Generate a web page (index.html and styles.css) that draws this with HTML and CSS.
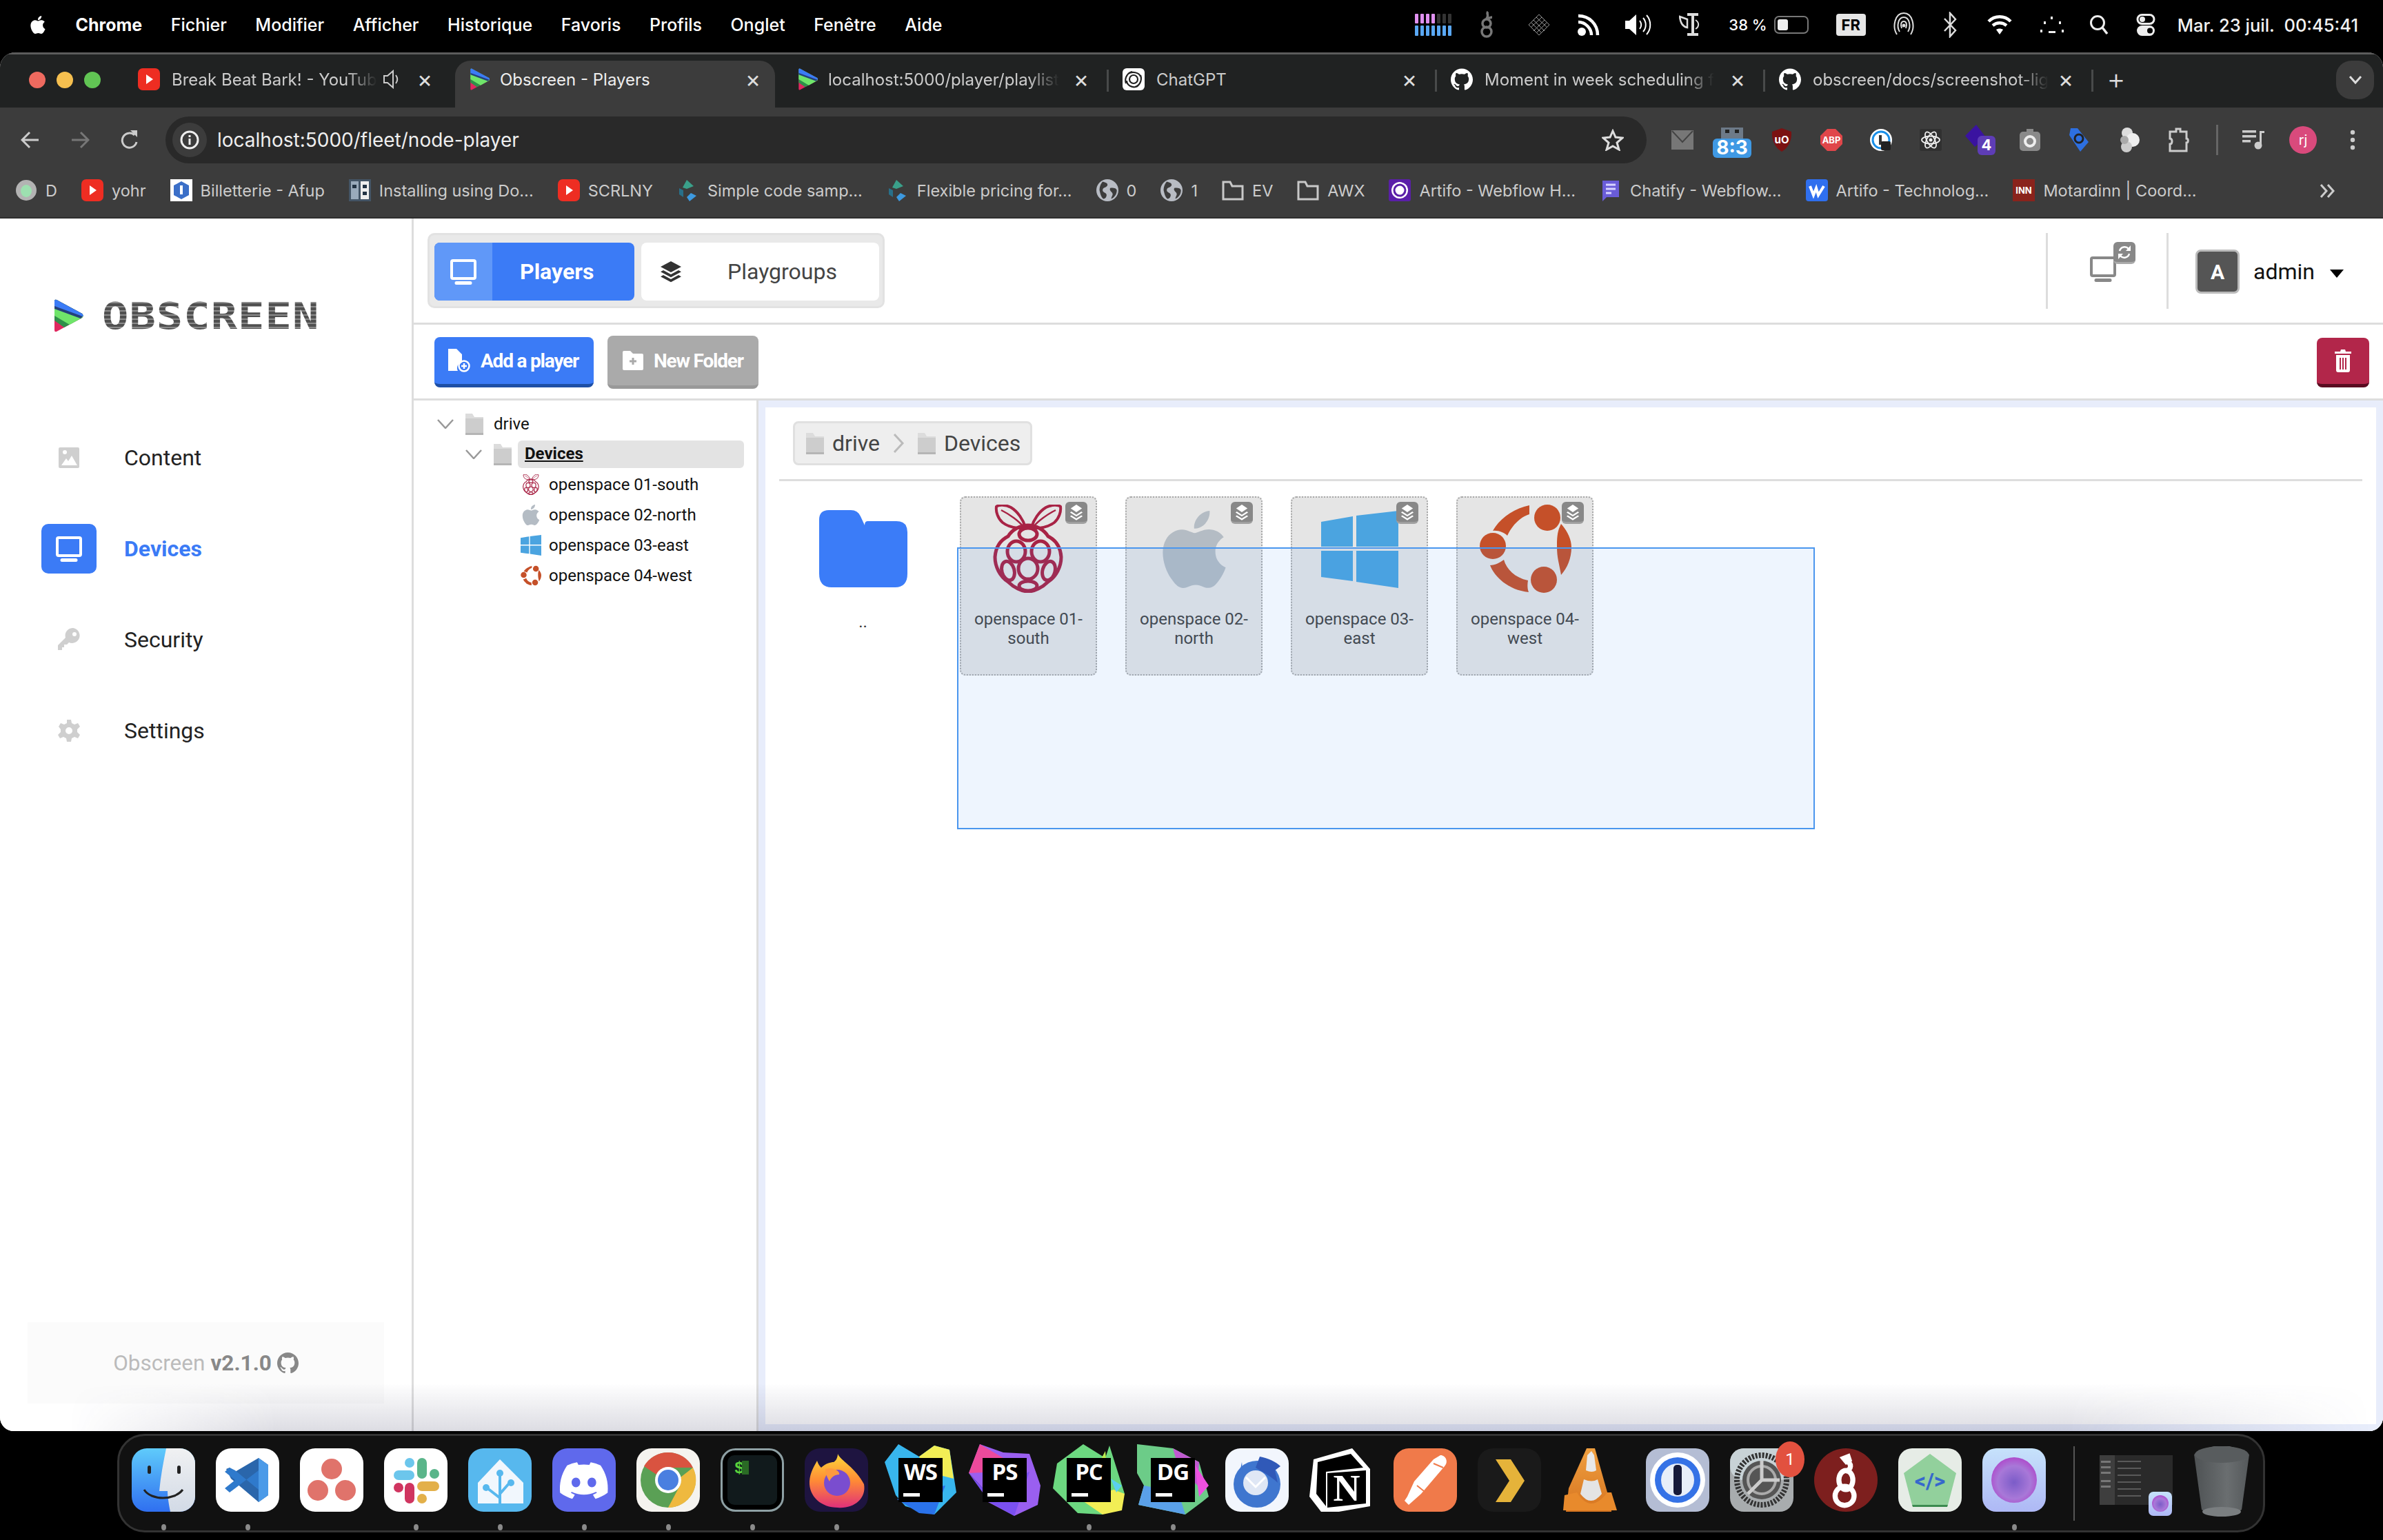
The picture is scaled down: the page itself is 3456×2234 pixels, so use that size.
FILE: index.html
```html
<!DOCTYPE html>
<html lang="fr">
<head>
<meta charset="utf-8">
<title>Obscreen - Players</title>
<link rel="stylesheet" href="styles.css">
</head>
<body>
<svg class="defs" width="0" height="0" aria-hidden="true">
<defs>
<linearGradient id="g-finder" x1="0" y1="0" x2="0" y2="1"><stop offset="0" stop-color="#5fcbfb"/><stop offset="1" stop-color="#2f6ff0"/></linearGradient>
<linearGradient id="g-finder2" x1="0" y1="0" x2="0" y2="1"><stop offset="0" stop-color="#f0f1f2"/><stop offset="1" stop-color="#d2dae6"/></linearGradient>
<linearGradient id="g-fox" x1="0" y1="0" x2="0" y2="1"><stop offset="0" stop-color="#ffd83a"/><stop offset=".5" stop-color="#ff8a35"/><stop offset="1" stop-color="#e0307a"/></linearGradient>
<linearGradient id="g-marble" x1="0" y1="0" x2="0" y2="1"><stop offset="0" stop-color="#c6e2fb"/><stop offset="1" stop-color="#aeb8f5"/></linearGradient>
<radialGradient id="g-orb" cx=".5" cy=".55" r=".6"><stop offset="0" stop-color="#7b5cc8"/><stop offset=".6" stop-color="#a878d8"/><stop offset="1" stop-color="#b040c8"/></radialGradient>
<linearGradient id="g-trash" x1="0" y1="0" x2="1" y2="0"><stop offset="0" stop-color="#4e5254"/><stop offset=".6" stop-color="#6a6e70"/><stop offset="1" stop-color="#55595b"/></linearGradient>
<linearGradient id="g-cone" x1="0" y1="0" x2="0" y2="1"><stop offset="0" stop-color="#f0a040"/><stop offset="1" stop-color="#d67420"/></linearGradient>

<symbol id="i-logo" viewBox="0 0 45 48">
<path d="M2 3 Q2 0 5 1 L42 21 Q45 24 42 27 L5 47 Q2 48 2 45Z" fill="#e0285f"/>
<path d="M2 3 Q2 0 5 1 L42 21 Q45 24 42 27 L16 41 L2 31Z" fill="#2f8f4a"/>
<path d="M2 3 Q2 0 5 1 L42 21 Q45 24 42 27 L24 37 L2 24Z" fill="#6fe56a"/>
<path d="M2 3 Q2 0 5 1 L42 21 Q45 24 40 28 L2 14Z" fill="#24407a"/>
<path d="M2 3 Q2 0 5 1 L42 21 Q45 24 43 25 L2 10Z" fill="#3b7bf6"/>
</symbol>
<symbol id="i-yt" viewBox="0 0 32 32"><rect y="0" width="32" height="32" rx="7" fill="#ee2d22"/><path d="M12 9l10 7-10 7z" fill="#fff"/></symbol>
<symbol id="i-gh" viewBox="0 0 24 24"><path fill="currentColor" d="M12 .297c-6.63 0-12 5.373-12 12 0 5.303 3.438 9.8 8.205 11.385.6.113.82-.258.82-.577 0-.285-.01-1.04-.015-2.04-3.338.724-4.042-1.61-4.042-1.61C4.422 18.07 3.633 17.7 3.633 17.7c-1.087-.744.084-.729.084-.729 1.205.084 1.838 1.236 1.838 1.236 1.07 1.835 2.809 1.305 3.495.998.108-.776.417-1.305.76-1.605-2.665-.3-5.466-1.332-5.466-5.93 0-1.31.465-2.38 1.235-3.22-.135-.303-.54-1.523.105-3.176 0 0 1.005-.322 3.3 1.23.96-.267 1.98-.399 3-.405 1.02.006 2.04.138 3 .405 2.28-1.552 3.285-1.23 3.285-1.23.645 1.653.24 2.873.12 3.176.765.84 1.23 1.91 1.23 3.22 0 4.61-2.805 5.625-5.475 5.92.42.36.81 1.096.81 2.22 0 1.606-.015 2.896-.015 3.286 0 .315.21.69.825.57C20.565 22.092 24 17.592 24 12.297c0-6.627-5.373-12-12-12"/></symbol>
<symbol id="i-apple" viewBox="0 0 24 24"><path fill="currentColor" d="M12.152 6.896c-.948 0-2.415-1.078-3.96-1.04-2.04.027-3.91 1.183-4.961 3.014-2.117 3.675-.546 9.103 1.519 12.09 1.013 1.454 2.208 3.09 3.792 3.039 1.52-.065 2.09-.987 3.935-.987 1.831 0 2.35.987 3.96.948 1.637-.026 2.676-1.48 3.676-2.948 1.156-1.688 1.636-3.325 1.662-3.415-.039-.013-3.182-1.221-3.22-4.857-.026-3.04 2.48-4.494 2.597-4.559-1.429-2.09-3.623-2.324-4.39-2.376-2-.156-3.675 1.09-4.61 1.09zM15.53 3.83c.843-1.012 1.4-2.427 1.245-3.83-1.207.052-2.662.805-3.532 1.818-.78.896-1.454 2.338-1.273 3.714 1.338.104 2.715-.688 3.559-1.701"/></symbol>
<symbol id="i-rpi" viewBox="0 0 103 128">
<g fill="none" stroke="#a82345" stroke-width="5">
<path stroke-width="4" d="M47 33C44 22 36 10 26 4 18 0 8 0 5 3 4 10 7 20 14 26 22 32 36 36 47 33ZM56 33C59 22 67 10 77 4 85 0 95 0 98 3 99 10 96 20 89 26 81 32 67 36 56 33Z"/>
<path stroke-width="2.500" d="M12 8C24 14 38 24 44 32M91 8C79 14 65 24 59 32"/>
<path d="M51 30C40 30 28 36 22 46 10 52 4 62 3 76 3 90 10 104 22 112 30 120 42 126 51 126 60 126 72 120 80 112 92 104 99 90 99 76 98 62 92 52 80 46 74 36 62 30 51 30Z"/>
<ellipse cx="51" cy="43" rx="13" ry="9"/>
<ellipse cx="34" cy="68" rx="13" ry="15"/><ellipse cx="69" cy="68" rx="13" ry="15"/>
<ellipse cx="51" cy="93" rx="14" ry="15"/>
<ellipse cx="22" cy="96" rx="9" ry="14" transform="rotate(-15 22 96)"/><ellipse cx="81" cy="96" rx="9" ry="14" transform="rotate(15 81 96)"/>
<ellipse cx="51" cy="118" rx="13" ry="7"/>
</g></symbol>
<symbol id="i-win" viewBox="0 0 112 112"><path fill="#4ba4e0" d="M0 16 46 8V52H0ZM51 7 112 0V52H51ZM0 58H46V102L0 96ZM51 58H112V112L51 103Z"/></symbol>
<symbol id="i-ubuntu" viewBox="0 0 134 128">
<g fill="#c55029"><ellipse cx="99" cy="19" rx="19" ry="19"/><ellipse cx="20" cy="60" rx="19" ry="19"/><ellipse cx="94" cy="109" rx="19" ry="19"/></g>
<path d="M73 1C50 6 30 20 20 38 28 37 37 41 41 45 48 30 60 18 73 14ZM119 28C115 36 113 42 113 60 113 78 116 84 119 102 128 92 134 78 134 62 134 50 128 38 119 28ZM16 88C22 104 42 124 72 127 70 122 70 116 71 110 52 106 40 94 36 80 30 84 24 88 16 88Z" fill="#c55029"/>
</symbol>
<symbol id="i-monitor" viewBox="0 0 40 40"><path fill="currentColor" d="M5 2h30a4 4 0 0 1 4 4v22a4 4 0 0 1-4 4H5a4 4 0 0 1-4-4V6a4 4 0 0 1 4-4zm0 4v22h30V6zM10 34h20a2 2 0 0 1 0 5H10a2 2 0 0 1 0-5z"/></symbol>
<symbol id="i-layers" viewBox="0 0 32 32"><path fill="currentColor" d="M16 1 31 9 16 17 1 9ZM5 14l11 6 11-6 4 2.300-15 8-15-8ZM5 21l11 6 11-6 4 2.300-15 8-15-8Z"/></symbol>
<symbol id="i-folder" viewBox="0 0 128 112"><path fill="currentColor" d="M0 14Q0 0 14 0H46Q56 0 60 9L66 22Q66 16 70 16H112Q128 16 128 32V92Q128 112 110 112H18Q0 112 0 92Z"/></symbol>
<symbol id="i-oldfolder" viewBox="0 0 28 32"><path fill="#dcdcdc" d="M1 1h10l3 5h13v26H1z"/><path fill="#cdcdcd" d="M1 8h26v24H1z"/><path fill="#b5b5b5" d="M1 29h26v3H1z"/></symbol>
<symbol id="i-globe" viewBox="0 0 28 28"><circle cx="14" cy="14" r="14" fill="#b8bcc4"/><path fill="#3c3c3c" d="M8 3c4 1 7 2 6 5-2 3-6 2-6 6 0 3 5 3 5 6 0 3-2 5-4 5-3-2-4-7-5-11C4 9 6 5 8 3zM18 11c4 0 7 0 8 3 0 5-3 9-7 11 0-4 3-5 1-8-2-2-4-4-2-6z"/></symbol>
<symbol id="i-bfolder" viewBox="0 0 32 32"><path fill="none" stroke="#c8c8c8" stroke-width="3" d="M2 4h10l3 6h15v19H2z"/></symbol>
<symbol id="i-chat" viewBox="0 0 32 32"><rect width="32" height="32" rx="6" fill="#fff"/><g fill="none" stroke="#222" stroke-width="2.200"><circle cx="16" cy="16" r="6"/><path d="M8 8C14 4 24 6 26 12M26 10C29 18 24 26 18 27M22 26C14 30 6 24 6 18M5 22C2 14 8 6 14 5"/></g></symbol>
<symbol id="i-stack" viewBox="0 0 22 26"><path fill="#fff" d="M11 1 20 7 11 13 2 7ZM3 12l8 5 8-5 2 1.500-10 6.500-10-6.500ZM3 18l8 5 8-5 2 1.500-10 6.500-10-6.500Z"/></symbol>
</defs>
</svg>

<div class="screen">
  <header class="menubar">
    <nav class="menu-left">
      <svg class="apple"><use href="#i-apple"/></svg>
      <span class="menu-app">Chrome</span><span>Fichier</span><span>Modifier</span><span>Afficher</span><span>Historique</span><span>Favoris</span><span>Profils</span><span>Onglet</span><span>Fenêtre</span><span>Aide</span>
    </nav>
    <div class="menu-right">
      <svg class="mi-meter" width="54" height="32" viewBox="0 0 54 32"><g fill="#e090f0"><rect x="0" width="5" height="14" rx="1"/><rect x="8" width="5" height="14" rx="1"/><rect x="16" width="5" height="14" rx="1"/><rect x="24" width="5" height="14" rx="1"/></g><g fill="#333"><rect x="32" width="5" height="14" rx="1"/><rect x="40" width="5" height="14" rx="1"/><rect x="48" width="5" height="14" rx="1"/></g><g fill="#5aa8f5"><rect x="0" y="17" width="5" height="15" rx="1"/><rect x="8" y="17" width="5" height="15" rx="1"/><rect x="16" y="17" width="5" height="15" rx="1"/><rect x="24" y="17" width="5" height="15" rx="1"/><rect x="32" y="17" width="5" height="15" rx="1"/><rect x="40" y="17" width="5" height="15" rx="1"/><rect x="48" y="17" width="5" height="15" rx="1"/></g></svg>
      <svg class="mi-snake" width="24" height="40" viewBox="0 0 24 40"><g fill="none" stroke="#777" stroke-width="3.500"><circle cx="12" cy="18" r="6"/><circle cx="12" cy="30" r="7"/><path d="M14 1c-3 3 2 4-2 10 2 0 6-2 8-2"/></g></svg>
      <svg class="mi-net" width="32" height="32" viewBox="0 0 32 32"><g fill="none" stroke="#999" stroke-width="1"><path d="M16 1 31 16 16 31 1 16Z"/><path d="M8 9 24 25M12 5 28 20M4 12 20 28M24 9 8 25M20 5 4 20M28 12 12 28"/></g></svg>
      <svg class="mi-rss" width="32" height="32" viewBox="0 0 32 32"><circle cx="6" cy="26" r="6" fill="#fff"/><g fill="none" stroke="#fff" stroke-width="4.500"><path d="M1 12c10 0 19 9 19 19"/><path d="M1 3c16 0 28 12 28 28"/></g></svg>
      <svg class="mi-vol" width="38" height="30" viewBox="0 0 38 30"><path d="M0 9h6l10-9v30L6 21H0z" fill="#fff"/><g fill="none" stroke="#fff" stroke-width="2"><path d="M21 9c3 4 3 8 0 12M26 5c5 6 5 14 0 20M31 1c7 8 7 20 0 28"/></g></svg>
      <svg class="mi-tool" width="32" height="34" viewBox="0 0 32 34"><path d="M1 5 12 9v12C6 20 2 14 1 5z" fill="none" stroke="#ddd" stroke-width="2.500"/><path d="M12 2h16M20 2v28M12 31h16" stroke="#ddd" stroke-width="4" fill="none"/><path d="M24 10c6 4 5 10 0 13" stroke="#ddd" stroke-width="2" fill="none"/></svg>
      <span class="menu-pct">38 %</span>
      <span class="battery"><span class="battery-level"></span></span>
      <span class="fr-box">FR</span>
      <svg class="mi-air" width="30" height="38" viewBox="0 0 30 38"><g fill="none" stroke="#ddd" stroke-width="2"><path d="M5 33C-2 22 2 2 15 2s17 20 10 31"/><path d="M9 29C4 21 7 8 15 8s11 13 6 21"/><path d="M12 24C10 19 11 14 15 14s5 5 3 10"/></g><circle cx="15" cy="20" r="2.500" fill="#ddd"/></svg>
      <svg class="mi-bt" width="20" height="38" viewBox="0 0 20 38"><path d="M2 10 18 27 10 36V2L18 11 2 28" fill="none" stroke="#ddd" stroke-width="2.500"/></svg>
      <svg class="mi-wifi" width="36" height="30" viewBox="0 0 36 30"><g fill="none" stroke="#fff" stroke-width="4.500"><path d="M2 10c9-9 23-9 32 0"/><path d="M8 16c6-5 14-5 20 0"/></g><path d="M13 22c3-2 7-2 10 0l-5 7z" fill="#fff"/></svg>
      <svg class="mi-dots" width="36" height="28" viewBox="0 0 36 28"><g fill="#eee"><rect x="16" y="2" width="3" height="4"/><rect x="6" y="9" width="3" height="4"/><rect x="28" y="9" width="3" height="4"/><rect x="1" y="21" width="3" height="4"/><rect x="13" y="23" width="10" height="3"/><rect x="32" y="21" width="3" height="4"/></g></svg>
      <svg class="mi-search" width="28" height="30" viewBox="0 0 28 30"><circle cx="12" cy="12" r="9.500" fill="none" stroke="#eee" stroke-width="3"/><path d="M19 19l7 9" stroke="#eee" stroke-width="3.500"/></svg>
      <svg class="mi-ctl" width="28" height="32" viewBox="0 0 28 32"><rect x="2" y="1.500" width="24" height="13" rx="6.500" fill="none" stroke="#eee" stroke-width="3"/><circle cx="9" cy="8" r="4" fill="#eee"/><rect x="1" y="17" width="26" height="15" rx="7.500" fill="#eee"/><circle cx="20" cy="24.500" r="4" fill="#000"/></svg>
      <span class="menu-date">Mar. 23 juil.&nbsp; 00:45:41</span>
    </div>
  </header>

  <div class="window">
    <div class="tabstrip">
      <div class="lights"><i class="light light-r"></i><i class="light light-y"></i><i class="light light-g"></i></div>
      <div class="tab"><svg class="fav"><use href="#i-yt"/></svg><span class="tab-title tab-fade">Break Beat Bark! - YouTub</span>
        <svg class="tab-sound" width="24" height="28" viewBox="0 0 24 28"><path d="M1 9h5l8-7v24l-8-7H1z" fill="none" stroke="#ccc" stroke-width="2"/><path d="M18 8c3 4 3 8 0 12" fill="none" stroke="#ccc" stroke-width="2"/></svg>
        <span class="tab-x">×</span></div>
      <div class="tab tab-active"><svg class="fav fav-logo"><use href="#i-logo"/></svg><span class="tab-title">Obscreen - Players</span><span class="tab-x">×</span></div>
      <div class="tab tab-sep tab-third"><svg class="fav fav-logo"><use href="#i-logo"/></svg><span class="tab-title tab-fade">localhost:5000/player/playlist</span><span class="tab-x">×</span></div>
      <div class="tab tab-sep"><svg class="fav"><use href="#i-chat"/></svg><span class="tab-title">ChatGPT</span><span class="tab-x">×</span></div>
      <div class="tab tab-sep"><svg class="fav fav-gh"><use href="#i-gh"/></svg><span class="tab-title tab-fade">Moment in week scheduling f</span><span class="tab-x">×</span></div>
      <div class="tab tab-sep"><svg class="fav fav-gh"><use href="#i-gh"/></svg><span class="tab-title tab-fade">obscreen/docs/screenshot-lig</span><span class="tab-x">×</span></div>
      <span class="tab-plus">+</span>
      <span class="tab-menu"><svg width="20" height="14" viewBox="0 0 20 14"><path d="M2 2l8 9 8-9" fill="none" stroke="#ddd" stroke-width="3"/></svg></span>
    </div>

    <div class="toolbar-chrome">
      <button class="cbtn" type="button"><svg width="28" height="26" viewBox="0 0 28 26"><path d="M26 13H3M13 2 2 13l11 11" fill="none" stroke="#ccc" stroke-width="3"/></svg></button>
      <button class="cbtn" type="button"><svg width="28" height="26" viewBox="0 0 28 26"><path d="M2 13h23M15 2l11 11-11 11" fill="none" stroke="#777" stroke-width="3"/></svg></button>
      <button class="cbtn" type="button"><svg width="26" height="28" viewBox="0 0 26 28"><path d="M23 17A10.500 10.500 0 1 1 20 7" fill="none" stroke="#ccc" stroke-width="3"/><path d="M14 0h10v10z" fill="#ccc"/></svg></button>
      <div class="omnibox">
        <span class="omni-info"><svg width="28" height="28" viewBox="0 0 28 28"><circle cx="14" cy="14" r="12" fill="none" stroke="#eee" stroke-width="3"/><rect x="12.500" y="12" width="3" height="9" fill="#eee"/><rect x="12.500" y="7" width="3" height="3" fill="#eee"/></svg></span>
        <span class="omni-url">localhost:5000/fleet/node-player</span>
        <svg class="omni-star" width="32" height="32" viewBox="0 0 32 32"><path d="M16 3l4 9 10 1-8 7 3 10-9-5-9 5 3-10-8-7 10-1z" fill="none" stroke="#ddd" stroke-width="3"/></svg>
      </div>
      <div class="exts">
        <span class="ext"><svg width="32" height="28" viewBox="0 0 32 28"><rect width="32" height="28" fill="#777"/><path d="M1 1l15 16L31 1" fill="none" stroke="#444" stroke-width="2"/></svg></span>
        <span class="ext"><svg class="ext-clock" width="56" height="44" viewBox="0 0 56 44"><rect x="12" y="0" width="32" height="16" fill="#6d7a88"/><rect x="18" y="3" width="6" height="5" fill="#222"/><rect x="32" y="3" width="6" height="5" fill="#222"/><rect x="0" y="16" width="56" height="28" rx="6" fill="#3f99e4"/><text x="28" y="39" text-anchor="middle" class="ext-clock-text">8:3</text></svg></span>
        <span class="ext"><svg width="30" height="34" viewBox="0 0 30 34"><path d="M15 0 29 5C30 18 24 29 15 34 6 29 0 18 1 5z" fill="#7a1212"/><text x="15" y="22" text-anchor="middle" class="ext-ub">uO</text></svg></span>
        <span class="ext"><svg width="32" height="32" viewBox="0 0 32 32"><path d="M10 0h12l10 10v12L22 32H10L0 22V10z" fill="#e0464a"/><text x="16" y="21" text-anchor="middle" class="ext-abp">ABP</text></svg></span>
        <span class="ext"><svg width="32" height="32" viewBox="0 0 32 32"><circle cx="16" cy="16" r="16" fill="#fff"/><circle cx="16" cy="16" r="12" fill="none" stroke="#1a8fe8" stroke-width="3"/><rect x="13" y="9" width="4" height="14" fill="#333"/><rect x="16" y="18" width="14" height="13" rx="2" fill="#222"/></svg></span>
        <span class="ext"><svg width="32" height="32" viewBox="0 0 32 32"><rect width="32" height="32" rx="3" fill="#303030"/><g fill="none" stroke="#eee" stroke-width="1.800"><ellipse cx="16" cy="16" rx="13" ry="5.500"/><ellipse cx="16" cy="16" rx="13" ry="5.500" transform="rotate(60 16 16)"/><ellipse cx="16" cy="16" rx="13" ry="5.500" transform="rotate(120 16 16)"/></g><circle cx="16" cy="16" r="2.500" fill="#eee"/></svg></span>
        <span class="ext"><svg width="44" height="44" viewBox="0 0 44 44"><path d="M16 0 30 18 14 32 0 16z" fill="#3a13a0"/><rect x="18" y="16" width="26" height="28" rx="6" fill="#5e3db6"/><text x="31" y="37" text-anchor="middle" class="ext-four">4</text></svg></span>
        <span class="ext"><svg width="30" height="32" viewBox="0 0 30 32"><rect y="4" width="30" height="28" rx="5" fill="#8a8a8a"/><rect x="10" y="0" width="10" height="6" fill="#8a8a8a"/><circle cx="15" cy="18" r="7" fill="none" stroke="#eee" stroke-width="4"/></svg></span>
        <span class="ext"><svg width="30" height="34" viewBox="0 0 30 34"><path d="M2 0h10l16 20-12 14L0 10z" fill="#2d6fe0"/><circle cx="14" cy="15" r="6" fill="none" stroke="#222" stroke-width="3"/></svg></span>
        <span class="ext"><svg width="30" height="36" viewBox="0 0 30 36"><circle cx="12" cy="8" r="8" fill="#ddd"/><circle cx="20" cy="18" r="10" fill="#eee"/><circle cx="11" cy="28" r="8" fill="#ccc"/><circle cx="8" cy="18" r="6" fill="#aaa"/></svg></span>
        <span class="ext"><svg width="30" height="36" viewBox="0 0 30 36"><path d="M2 6h9V2h6v4h9v10c3 0 3 6 0 6v12H2V24c4 0 4-8 0-8z" fill="none" stroke="#ccc" stroke-width="3"/></svg></span>
        <i class="ext-sep"></i>
        <span class="ext"><svg width="32" height="28" viewBox="0 0 32 28"><g fill="#ccc"><rect width="20" height="3.500"/><rect y="7" width="20" height="3.500"/><rect y="14" width="12" height="3.500"/></g><rect x="25" y="1" width="3" height="20" fill="#ccc"/><circle cx="23" cy="22" r="5.500" fill="#ccc"/><rect x="25" y="1" width="7" height="3" fill="#ccc"/></svg></span>
        <span class="ext"><span class="avatar-chrome">rj</span></span>
        <span class="ext"><svg width="8" height="30" viewBox="0 0 8 30"><g fill="#ccc"><circle cx="4" cy="4" r="3.200"/><circle cx="4" cy="15" r="3.200"/><circle cx="4" cy="26" r="3.200"/></g></svg></span>
      </div>
    </div>

    <div class="bookmarks">
      <a class="bm"><svg class="bm-i" viewBox="0 0 32 32"><circle cx="16" cy="16" r="15" fill="#b3b3b3"/><ellipse cx="16" cy="17" rx="8" ry="9" fill="#9de0b0"/></svg>D</a>
      <a class="bm"><svg class="bm-i"><use href="#i-yt"/></svg>yohr</a>
      <a class="bm"><svg class="bm-i" viewBox="0 0 32 32"><rect width="32" height="32" fill="#fff"/><path d="M16 3l11 6v14l-11 6-11-6V9z" fill="#3b6fc8"/><path d="M16 9v13" stroke="#fff" stroke-width="4"/></svg>Billetterie - Afup</a>
      <a class="bm"><svg class="bm-i" viewBox="0 0 32 32"><rect width="32" height="32" fill="#445566"/><rect x="3" y="3" width="11" height="26" fill="#9ab"/><rect x="17" y="3" width="12" height="26" fill="#eee"/><rect x="5" y="8" width="6" height="5" fill="#234"/><rect x="20" y="8" width="6" height="5" fill="#234"/><rect x="20" y="18" width="6" height="5" fill="#234"/></svg>Installing using Do...</a>
      <a class="bm"><svg class="bm-i"><use href="#i-yt"/></svg>SCRLNY</a>
      <a class="bm"><svg class="bm-i" viewBox="0 0 32 32"><path d="M14 1 24 10 14 14 8 12z" fill="#3aa08a"/><path d="M3 13l6 3v10L3 22z" fill="#28708a"/><path d="M20 20l8 4-10 8-4-6z" fill="#3d9ae0"/></svg>Simple code samp...</a>
      <a class="bm"><svg class="bm-i" viewBox="0 0 32 32"><path d="M14 1 24 10 14 14 8 12z" fill="#3aa08a"/><path d="M3 13l6 3v10L3 22z" fill="#28708a"/><path d="M20 20l8 4-10 8-4-6z" fill="#3d9ae0"/></svg>Flexible pricing for...</a>
      <a class="bm"><svg class="bm-i"><use href="#i-globe"/></svg>0</a>
      <a class="bm"><svg class="bm-i"><use href="#i-globe"/></svg>1</a>
      <a class="bm"><svg class="bm-i"><use href="#i-bfolder"/></svg>EV</a>
      <a class="bm"><svg class="bm-i"><use href="#i-bfolder"/></svg>AWX</a>
      <a class="bm"><svg class="bm-i" viewBox="0 0 32 32"><rect width="32" height="32" rx="3" fill="#5a1fa8"/><circle cx="16" cy="16" r="12" fill="#fff"/><circle cx="16" cy="16" r="8" fill="none" stroke="#5a1fa8" stroke-width="3"/></svg>Artifo - Webflow H...</a>
      <a class="bm"><svg class="bm-i" viewBox="0 0 32 32"><path d="M4 2h24v24H10l-6 6z" fill="#6a5cd8"/><path d="M9 8h14M9 14h14M9 20h8" stroke="#d8d4ff" stroke-width="3"/></svg>Chatify - Webflow...</a>
      <a class="bm"><svg class="bm-i" viewBox="0 0 32 32"><rect width="32" height="32" rx="4" fill="#2f6fee"/><path d="M6 10l5 13 4-10 3 10 8-13" fill="none" stroke="#fff" stroke-width="4"/></svg>Artifo - Technolog...</a>
      <a class="bm"><svg class="bm-i" viewBox="0 0 32 32"><rect width="32" height="32" fill="#8a231c"/><text x="16" y="21" text-anchor="middle" class="bm-inn">INN</text></svg>Motardinn | Coord...</a>
      <svg class="bm-more" width="22" height="22" viewBox="0 0 22 22"><path d="M2 2l8 9-8 9M12 2l8 9-8 9" fill="none" stroke="#ccc" stroke-width="3"/></svg>
    </div>

    <div class="page">
      <aside class="sidebar">
        <div class="brand"><svg class="brand-logo"><use href="#i-logo"/></svg><span class="brand-name">OBSCREEN</span></div>
        <nav class="nav">
          <a class="nav-item"><span class="nav-ico"><svg width="32" height="32" viewBox="0 0 32 32"><path d="M3 1h26a2 2 0 0 1 2 2v26a2 2 0 0 1-2 2H3a2 2 0 0 1-2-2V3a2 2 0 0 1 2-2zM7 8a3 3 0 1 0 6 0 3 3 0 0 0-6 0zM5 27h23l-8-14-5 8-3-4z" fill="#cfcfcf" fill-rule="evenodd"/></svg></span>Content</a>
          <a class="nav-item nav-active"><span class="nav-ico"><svg width="40" height="40"><use href="#i-monitor"/></svg></span>Devices</a>
          <a class="nav-item"><span class="nav-ico"><svg width="32" height="34" viewBox="0 0 32 34"><path d="M21 0a11 11 0 1 1-5 21l-3 3H9v4H6v4H0v-7l11-11A11 11 0 0 1 21 0zm3 6a3 3 0 1 0 0 6 3 3 0 0 0 0-6z" fill="#cfcfcf" fill-rule="evenodd"/></svg></span>Security</a>
          <a class="nav-item"><span class="nav-ico"><svg width="32" height="32" viewBox="0 0 32 32"><path fill="#cfcfcf" fill-rule="evenodd" d="M13 0h6l1 5 4 2 5-2 3 5-4 4v4l4 4-3 5-5-2-4 2-1 5h-6l-1-5-4-2-5 2-3-5 4-4v-4L1 10l3-5 5 2 4-2zM16 11a5 5 0 1 0 0 10 5 5 0 0 0 0-10z"/></svg></span>Settings</a>
        </nav>
        <div class="side-foot"><span class="foot-name">Obscreen</span> <b class="foot-ver">v2.1.0</b> <svg class="foot-gh"><use href="#i-gh"/></svg></div>
      </aside>

      <div class="content">
        <div class="topbar">
          <div class="seg">
            <a class="seg-btn seg-on"><span class="seg-ico"><svg width="40" height="40"><use href="#i-monitor"/></svg></span><span class="seg-label">Players</span></a>
            <a class="seg-btn seg-off"><span class="seg-ico"><svg width="32" height="32"><use href="#i-layers"/></svg></span><span class="seg-label">Playgroups</span></a>
          </div>
          <div class="top-right">
            <div class="sync">
              <span class="sync-wrap"><svg class="sync-mon" width="42" height="40"><use href="#i-monitor"/></svg>
              <span class="sync-badge"><svg width="22" height="22" viewBox="0 0 22 22"><g fill="none" stroke="#fff" stroke-width="2.500"><path d="M4 9a7.500 7.500 0 0 1 13-3M18 13a7.500 7.500 0 0 1-13 3"/></g><path d="M20 1v8h-7zM2 21v-8h7z" fill="#fff"/></svg></span></span>
            </div>
            <div class="user"><span class="user-av">A</span><span class="user-name">admin</span><i class="user-caret"></i></div>
          </div>
        </div>
        <div class="actions">
          <a class="btn btn-blue"><svg width="34" height="34" viewBox="0 0 34 34"><path d="M2 0h12l8 8v12a8 8 0 0 0-6 12H2z" fill="#fff"/><circle cx="25" cy="25" r="7.500" fill="none" stroke="#fff" stroke-width="2.500"/><path d="M25 21v8M21 25h8" stroke="#fff" stroke-width="2.500"/></svg>Add a player</a>
          <a class="btn btn-grey"><svg width="30" height="28" viewBox="0 0 30 28"><path d="M2 0h9l4 4h13a2 2 0 0 1 2 2v20a2 2 0 0 1-2 2H2a2 2 0 0 1-2-2V2a2 2 0 0 1 2-2z" fill="#fff"/><path d="M15 10v10M10 15h10" stroke="#aaa" stroke-width="3"/></svg>New Folder</a>
          <a class="btn-del"><svg width="26" height="34" viewBox="0 0 26 34"><path d="M1 4h8l1-3h6l1 3h8v3H1z" fill="#fff"/><path fill="#fff" fill-rule="evenodd" d="M3 9h20v22a3 3 0 0 1-3 3H6a3 3 0 0 1-3-3zM8 13v17h2V13zm4 0v17h2V13zm4 0v17h2V13z"/></svg></a>
        </div>
        <div class="work">
          <div class="tree">
            <div class="tree-row tree-l0"><svg class="tree-chev" viewBox="0 0 24 14"><path d="M1 1l11 12L23 1" fill="none" stroke="#999" stroke-width="2.500"/></svg><svg class="tree-folder"><use href="#i-oldfolder"/></svg><span>drive</span></div>
            <div class="tree-row tree-l1"><svg class="tree-chev" viewBox="0 0 24 14"><path d="M1 1l11 12L23 1" fill="none" stroke="#999" stroke-width="2.500"/></svg><svg class="tree-folder"><use href="#i-oldfolder"/></svg><span class="tree-sel">Devices</span></div>
            <div class="tree-row tree-l2"><svg class="tree-ico"><use href="#i-rpi"/></svg><span>openspace 01-south</span></div>
            <div class="tree-row tree-l2"><svg class="tree-ico tree-apple"><use href="#i-apple"/></svg><span>openspace 02-north</span></div>
            <div class="tree-row tree-l2"><svg class="tree-ico"><use href="#i-win"/></svg><span>openspace 03-east</span></div>
            <div class="tree-row tree-l2"><svg class="tree-ico"><use href="#i-ubuntu"/></svg><span>openspace 04-west</span></div>
          </div>
          <div class="panel-wrap">
            <main class="panel">
              <div class="crumb"><svg class="crumb-f"><use href="#i-oldfolder"/></svg><span>drive</span>
                <svg class="crumb-sep" width="17" height="28" viewBox="0 0 17 28"><path d="M2 1l12 13L2 27" fill="none" stroke="#bbb" stroke-width="3"/></svg>
                <svg class="crumb-f"><use href="#i-oldfolder"/></svg><span>Devices</span></div>
              <hr class="rule">
              <div class="grid">
                <div class="up"><svg class="up-ico"><use href="#i-folder"/></svg><span class="up-label">..</span></div>
                <div class="tile"><span class="tile-badge"><svg width="20" height="24"><use href="#i-stack"/></svg></span><svg class="tile-ico tile-rpi"><use href="#i-rpi"/></svg><span class="tile-label">openspace 01-south</span></div>
                <div class="tile"><span class="tile-badge"><svg width="20" height="24"><use href="#i-stack"/></svg></span><svg class="tile-ico tile-apple"><use href="#i-apple"/></svg><span class="tile-label">openspace 02-north</span></div>
                <div class="tile"><span class="tile-badge"><svg width="20" height="24"><use href="#i-stack"/></svg></span><svg class="tile-ico tile-win"><use href="#i-win"/></svg><span class="tile-label">openspace 03-east</span></div>
                <div class="tile"><span class="tile-badge"><svg width="20" height="24"><use href="#i-stack"/></svg></span><svg class="tile-ico tile-ub"><use href="#i-ubuntu"/></svg><span class="tile-label">openspace 04-west</span></div>
              </div>
              <div class="marquee"></div>
            </main>
          </div>
        </div>
      </div>
    </div>
    <div class="win-shade"></div>
  </div>

  <footer class="dock">
    <div class="dk on"><svg class="dk-i" viewBox="0 0 92 92"><rect width="92" height="92" rx="22" fill="url(#g-finder)"/><path d="M50 0H70A22 22 0 0 1 92 22V70A22 22 0 0 1 70 92H56C54 82 52 70 52 62H40C42 40 46 20 50 0Z" fill="url(#g-finder2)"/><rect x="23" y="25" width="5" height="12" rx="2.500" fill="#222"/><rect x="66" y="25" width="5" height="12" rx="2.500" fill="#222"/><path d="M18 60C28 76 62 76 74 60" fill="none" stroke="#222" stroke-width="3"/></svg><i class="dk-dot"></i></div>
    <div class="dk on"><svg class="dk-i" viewBox="0 0 92 92"><rect width="92" height="92" rx="22" fill="#fff"/><path d="M62 14 76 24V68L62 78 22 44 15 30 20 28 28 34z" fill="#2a66ab"/><path d="M62 14 76 24V68L62 78z" fill="#4b9ae8"/><path d="M62 32V60L28 32 20 28 13 34 28 46 13 58 20 64 28 58z" fill="#2f7acc"/></svg><i class="dk-dot"></i></div>
    <div class="dk"><svg class="dk-i" viewBox="0 0 92 92"><rect width="92" height="92" rx="22" fill="#fff"/><g fill="#e0736b"><ellipse cx="46" cy="30" rx="15" ry="15"/><ellipse cx="26" cy="61" rx="15" ry="15"/><ellipse cx="66" cy="61" rx="15" ry="15"/></g></svg></div>
    <div class="dk on"><svg class="dk-i" viewBox="0 0 92 92"><rect width="92" height="92" rx="22" fill="#fff"/><rect x="48" y="14" width="14" height="30" rx="7" fill="#5ab58a"/><rect x="66" y="30" width="14" height="14" rx="7" fill="#5ab58a"/><rect x="30" y="14" width="14" height="14" rx="7" fill="#6cc6ec"/><rect x="14" y="32" width="30" height="14" rx="7" fill="#6cc6ec"/><rect x="14" y="50" width="14" height="14" rx="7" fill="#d03560"/><rect x="30" y="50" width="14" height="30" rx="7" fill="#d03560"/><rect x="48" y="48" width="32" height="14" rx="7" fill="#e3b04a"/><rect x="48" y="66" width="14" height="14" rx="7" fill="#e3b04a"/></svg><i class="dk-dot"></i></div>
    <div class="dk on"><svg class="dk-i" viewBox="0 0 92 92"><rect width="92" height="92" rx="22" fill="#57b8ee"/><path d="M46 16 80 50V80H14V50Z" fill="#f1f7fd"/><g fill="none" stroke="#57b8ee" stroke-width="4"><path d="M46 36V80M46 66 60 50M46 72 28 58"/></g><g fill="#57b8ee"><ellipse cx="46" cy="36" rx="5" ry="5"/><ellipse cx="62" cy="50" rx="5" ry="5"/><ellipse cx="26" cy="57" rx="5" ry="5"/></g></svg><i class="dk-dot"></i></div>
    <div class="dk on"><svg class="dk-i" viewBox="0 0 92 92"><rect width="92" height="92" rx="22" fill="#5f69ec"/><g transform="translate(11 12) scale(2.900)"><path fill="#fff" d="M20.317 4.3698a19.7913 19.7913 0 00-4.8851-1.5152.0741.0741 0 00-.0785.0371c-.211.3753-.4447.8648-.6083 1.2495-1.8447-.2762-3.68-.2762-5.4868 0-.1636-.3933-.4058-.8742-.6177-1.2495a.077.077 0 00-.0785-.037 19.7363 19.7363 0 00-4.8852 1.515.0699.0699 0 00-.0321.0277C.5334 9.0458-.319 13.5799.0992 18.0578a.0824.0824 0 00.0312.0561c2.0528 1.5076 4.0413 2.4228 5.9929 3.0294a.0777.0777 0 00.0842-.0276c.4616-.6304.8731-1.2952 1.226-1.9942a.076.076 0 00-.0416-.1057c-.6528-.2476-1.2743-.5495-1.8722-.8923a.077.077 0 01-.0076-.1277c.1258-.0943.2517-.1923.3718-.2914a.0743.0743 0 01.0776-.0105c3.9278 1.7933 8.18 1.7933 12.0614 0a.0739.0739 0 01.0785.0095c.1202.099.246.1981.3728.2924a.077.077 0 01-.0066.1276 12.2986 12.2986 0 01-1.873.8914.0766.0766 0 00-.0407.1067c.3604.698.7719 1.3628 1.225 1.9932a.076.076 0 00.0842.0286c1.961-.6067 3.9495-1.5219 6.0023-3.0294a.077.077 0 00.0313-.0552c.5004-5.177-.8382-9.6739-3.5485-13.6604a.061.061 0 00-.0312-.0286zM8.02 15.3312c-1.1825 0-2.1569-1.0857-2.1569-2.419 0-1.3332.9555-2.4189 2.157-2.4189 1.2108 0 2.1757 1.0952 2.1568 2.419 0 1.3332-.9555 2.4189-2.1569 2.4189zm7.9748 0c-1.1825 0-2.1569-1.0857-2.1569-2.419 0-1.3332.9554-2.4189 2.1569-2.4189 1.2108 0 2.1757 1.0952 2.1568 2.419 0 1.3332-.946 2.4189-2.1568 2.4189Z"/></g></svg><i class="dk-dot"></i></div>
    <div class="dk on"><svg class="dk-i" viewBox="0 0 92 92"><rect width="92" height="92" rx="22" fill="#f5f3ef"/><circle cx="46" cy="46" r="40" fill="#5aa055"/><path d="M46 6A40 40 0 0 1 82 28H46A18 18 0 0 0 29 38L11 26A40 40 0 0 1 46 6Z" fill="#d95340"/><path d="M82 28A40 40 0 0 1 46 86L62 56A18 18 0 0 0 64 42Z" fill="#efb93f"/><circle cx="46" cy="46" r="19" fill="#fff"/><circle cx="46" cy="46" r="15" fill="#4a7fe0"/></svg><i class="dk-dot"></i></div>
    <div class="dk on"><svg class="dk-i" viewBox="0 0 92 92"><rect x="1.500" y="1.500" width="89" height="89" rx="20" fill="#000" stroke="#8ea0a4" stroke-width="3"/><rect x="10" y="10" width="72" height="72" rx="10" fill="#111a1c"/><text x="20" y="36" class="dk-term">$</text><rect x="31" y="18" width="10" height="20" fill="#2a6a25"/></svg><i class="dk-dot"></i></div>
    <div class="dk on"><svg class="dk-i" viewBox="0 0 92 92"><rect width="92" height="92" rx="22" fill="#1e1440"/><path d="M48 8C52 18 74 28 86 52 90 74 70 88 48 86 24 86 6 70 7 48 8 34 14 26 18 18 20 24 22 26 24 28 30 22 38 20 42 20 46 18 48 12 48 8Z" fill="url(#g-fox)"/><circle cx="47" cy="50" r="19" fill="#7a4dcf"/><path d="M30 30C42 26 52 34 50 38 44 38 38 42 36 48 34 44 30 38 30 30Z" fill="#ff9a40"/></svg><i class="dk-dot"></i></div>
    <div class="dk dk-jb"><svg class="dk-i" viewBox="0 0 104 104"><path d="M20 0 50 18 72 2 94 8 104 70 84 90 72 102 30 90 16 74 0 26Z" fill="#38b6ee"/><path d="M50 18 72 2 94 8 100 50 60 40Z" fill="#f2ee55"/><path d="M18 80 50 100 72 102 88 60 40 70Z" fill="#2a72ea"/><rect x="20" y="20" width="64" height="64"/><text x="52" y="52" text-anchor="middle" class="jb-text">WS</text><rect x="27" y="71" width="24" height="5" fill="#fff"/></svg></div>
    <div class="dk dk-jb"><svg class="dk-i" viewBox="0 0 104 104"><path d="M16 0 50 12 88 14 104 60 100 88 66 104 28 84 24 68 0 42Z" fill="#9a5ff0"/><path d="M16 0 50 20 44 40 0 42Z" fill="#ec4a9c"/><path d="M0 42 24 68 88 40 66 104 30 84Z" fill="#7a50f0"/><rect x="20" y="20" width="64" height="64"/><text x="52" y="52" text-anchor="middle" class="jb-text">PS</text><rect x="27" y="71" width="24" height="5" fill="#fff"/></svg></div>
    <div class="dk dk-jb on"><svg class="dk-i" viewBox="0 0 104 104"><path d="M6 28 44 0 76 20 82 2 104 72 72 102 36 100 0 64Z" fill="#6cd880"/><path d="M40 80 88 66 104 72 100 96 72 102Z" fill="#f2ee55"/><path d="M60 40 76 10 80 50Z" fill="#bcec50"/><path d="M84 50 100 60 92 70Z" fill="#5ad0f0"/><rect x="20" y="20" width="64" height="64"/><text x="52" y="52" text-anchor="middle" class="jb-text">PC</text><rect x="27" y="71" width="24" height="5" fill="#fff"/></svg><i class="dk-dot"></i></div>
    <div class="dk dk-jb on"><svg class="dk-i" viewBox="0 0 104 104"><path d="M0 0 52 6 90 26 104 76 94 84 70 102 2 88 10 60 0 42Z" fill="#6ccc88"/><path d="M52 6 90 26 88 60 60 34Z" fill="#c05ad0"/><path d="M84 30 90 76 104 60Z" fill="#ee50e0"/><path d="M10 60 60 70 70 102 2 88Z" fill="#5aa0e8"/><rect x="20" y="20" width="64" height="64"/><text x="52" y="52" text-anchor="middle" class="jb-text">DG</text><rect x="27" y="71" width="24" height="5" fill="#fff"/></svg><i class="dk-dot"></i></div>
    <div class="dk"><svg class="dk-i" viewBox="0 0 92 92"><rect width="92" height="92" rx="22" fill="#f2f6fd"/><circle cx="46" cy="52" r="34" fill="#3f76cf"/><path d="M24 20 16 60 26 40Z" fill="#3f76cf"/><path d="M50 12C62 14 74 20 80 26L72 32 76 50C66 40 50 32 44 28Z" fill="#3059b8"/><circle cx="44" cy="50" r="18" fill="#dfe7f5"/><path d="M30 42 44 56 58 42" fill="none" stroke="#fff" stroke-width="3"/></svg></div>
    <div class="dk"><svg class="dk-i" viewBox="0 0 92 92"><path d="M6 16 62 0 88 30V84L20 96 0 70Z" fill="#fff"/><path d="M12 20 60 8 78 28 24 34V84L10 66Z" fill="#000"/><path d="M26 36 82 32V80L26 86Z" fill="#000"/><text x="54" y="76" text-anchor="middle" class="dk-notion">N</text></svg></div>
    <div class="dk"><svg class="dk-i" viewBox="0 0 92 92"><rect width="92" height="92" rx="22" fill="#f07a4a"/><path d="M68 10C76 10 80 20 74 26L40 66 22 82 16 76 20 70 30 48 58 16Z" fill="#fff"/><path d="M58 22 72 28M34 54 44 62" stroke="#f07a4a" stroke-width="2"/></svg></div>
    <div class="dk"><svg class="dk-i" viewBox="0 0 92 92"><rect width="92" height="92" rx="22" fill="#1a1a1a"/><path d="M26 16H48L68 47 48 78H26L46 47Z" fill="#e5b33a"/></svg></div>
    <div class="dk"><svg class="dk-i" viewBox="0 0 92 92"><path d="M36 0h12l24 85v7H6l4-34z" fill="url(#g-cone)"/><path d="M37 10 43 4 47 10 50 32Q44 36 35 32Z" fill="#e8e8e8"/><path d="M32 45Q44 50 52 45L58 66Q42 86 27 66Z" fill="#e4e4e4"/><path d="M4 68 22 64Q42 96 66 64H72L80 90H2Z" fill="#e88a2c"/></svg></div>
    <div class="dk"><svg class="dk-i" viewBox="0 0 92 92"><rect width="92" height="92" rx="20" fill="#b4bdd4"/><circle cx="46" cy="46" r="40" fill="#fff"/><circle cx="46" cy="46" r="33" fill="#3572e6"/><circle cx="46" cy="46" r="24" fill="#e8eef9"/><rect x="40" y="24" width="12" height="44" rx="5" fill="#171a3a"/></svg></div>
    <div class="dk dk-badged"><svg class="dk-i" viewBox="0 0 92 92"><rect width="92" height="92" rx="20" fill="#a8acae"/><rect width="92" height="46" rx="20" fill="#c8d2d6"/><circle cx="46" cy="46" r="36" fill="none" stroke="#333" stroke-width="8" stroke-dasharray="3 2"/><circle cx="46" cy="46" r="28" fill="#555"/><circle cx="46" cy="46" r="20" fill="none" stroke="#aaa" stroke-width="4"/><path d="M46 46V18M46 46 72 46M46 46 26 66" stroke="#ccc" stroke-width="5"/></svg><span class="dk-badge">1</span></div>
    <div class="dk"><svg class="dk-i" viewBox="0 0 100 100"><circle cx="50" cy="50" r="50" fill="#7d1f1e"/><g fill="none" stroke="#fff" stroke-width="8"><ellipse cx="50" cy="50" rx="11" ry="15"/><ellipse cx="48" cy="75" rx="15" ry="15"/><path d="M48 18C62 24 58 34 50 36"/></g><path d="M40 14 56 8 60 20 50 26Z" fill="#fff"/></svg></div>
    <div class="dk"><svg class="dk-i" viewBox="0 0 92 92"><rect width="92" height="92" rx="20" fill="#e6ece6"/><path d="M46 8 84 36 72 82H20L8 36Z" fill="#92d09c"/><path d="M20 82H72L71 85H21Z" fill="#3c8a50"/><text x="46" y="58" text-anchor="middle" class="dk-code">&lt;/&gt;</text></svg></div>
    <div class="dk on"><svg class="dk-i" viewBox="0 0 92 92"><rect width="92" height="92" rx="20" fill="url(#g-marble)"/><ellipse cx="46" cy="46" rx="33" ry="33" fill="url(#g-orb)"/></svg><i class="dk-dot"></i></div>
    <i class="dock-sep"></i>
    <div class="dk dk-thumb"><svg class="dk-i" viewBox="0 0 106 90"><rect y="0" width="106" height="72" fill="#2a2a2a"/><rect width="22" height="72" fill="#3e3e3e"/><g fill="#777"><rect x="2" y="8" width="14" height="3"/><rect x="2" y="16" width="14" height="3"/><rect x="2" y="24" width="14" height="3"/><rect x="2" y="36" width="14" height="3"/><rect x="2" y="44" width="14" height="3"/></g><g fill="#5a5a5a"><rect x="26" y="8" width="34" height="2"/><rect x="26" y="18" width="34" height="2"/><rect x="26" y="28" width="34" height="2"/><rect x="26" y="38" width="34" height="2"/><rect x="26" y="48" width="34" height="2"/><rect x="26" y="58" width="34" height="2"/></g><rect x="71" y="53" width="34" height="35" rx="7" fill="url(#g-marble)"/><ellipse cx="88" cy="70" rx="12" ry="12" fill="url(#g-orb)"/></svg></div>
    <div class="dk dk-trash"><svg class="dk-i" viewBox="0 0 82 102"><path d="M1 12Q41 -14 81 12L70 92Q41 110 12 92Z" fill="url(#g-trash)"/><ellipse cx="41" cy="12" rx="39" ry="12" fill="#585c5e"/><ellipse cx="41" cy="95" rx="28" ry="7" fill="#7a7e80"/></svg></div>
  </footer>
</div>
</body>
</html>
```
FILE: styles.css
```css
* { box-sizing: border-box; }
html, body { margin: 0; padding: 0; background: #000; }
body { width: 3456px; height: 2234px; overflow: hidden; font-family: Roboto, "Liberation Sans", sans-serif; }
.defs { position: absolute; }
a { color: inherit; text-decoration: none; }
button { background: none; border: 0; padding: 0; }
svg { display: block; flex: none; }

.screen { display: flex; flex-direction: column; width: 3456px; height: 2234px; background: #000; }

/* macOS menu bar */
.menubar { display: flex; align-items: center; height: 76px; flex: none; padding: 0 36px 4px 42px; background: #000; color: #fff; font: 500 25px Inter, sans-serif; }
.menu-left { display: flex; align-items: center; gap: 41.500px; }
.menu-left .apple { width: 26px; height: 32px; color: #fff; margin-right: 0; }
.menu-app { font-weight: 700; }
.menu-right { display: flex; align-items: center; margin-left: auto; }
.mi-meter { margin-right: 38px; }
.mi-snake { margin-right: 48px; }
.mi-net { margin-right: 40px; }
.mi-rss { margin-right: 37px; }
.mi-vol { margin-right: 40px; }
.mi-tool { margin-right: 40px; }
.menu-pct { font-size: 22px; margin-right: 10px; white-space: nowrap; }
.battery { display: block; width: 50px; height: 26px; border: 2px solid #777; border-radius: 7px; padding: 3px; margin-right: 40px; }
.battery-level { display: block; width: 15px; height: 100%; background: #eee; border-radius: 3px; }
.fr-box { width: 43px; height: 32px; background: #e6e6e6; color: #000; border-radius: 4px; font-size: 22px; font-weight: 700; display: flex; align-items: center; justify-content: center; margin-right: 40px; }
.mi-air { margin-right: 42px; }
.mi-bt { margin-right: 44px; }
.mi-wifi { margin-right: 40px; }
.mi-dots { margin-right: 36px; }
.mi-search { margin-right: 40px; }
.mi-ctl { margin-right: 32px; }
.menu-date { font-size: 25.500px; color: #f2f2f2; white-space: nowrap; }

/* window */
.window { position: relative; display: flex; flex-direction: column; height: 2000px; flex: none; background: #fff; border-radius: 22px 22px 20px 20px; overflow: hidden; }

.tabstrip { display: flex; height: 80px; flex: none; background: #202222; border-top: 3px solid #5c5c5c; padding-left: 42px; position: relative; color: #ccc; font: 400 24px Inter, sans-serif; }
.lights { display: flex; align-items: center; gap: 16px; width: 138px; height: 74px; }
.light { width: 24px; height: 24px; border-radius: 50%; }
.light-r { background: #ee6a5f; }
.light-y { background: #f5bf4f; }
.light-g { background: #61c554; }
.tab { position: relative; display: flex; align-items: center; width: 476px; padding: 0 28px 0 20px; height: 72px; flex: none; }
.tab.tab-active { width: 464px; margin: 9px 12px 0 4px; height: 68px; padding: 0 20px 14px; background: #3c3c3c; border-radius: 22px 22px 0 0; color: #eee; }
.tab-third { width: 472px; }
.tab-sep::after { content: ""; position: absolute; right: 0; top: 22px; width: 3px; height: 32px; background: #484a4a; }
.fav { width: 32px; height: 32px; margin-right: 17px; }
.fav-logo { margin-right: 13px; }
.fav-gh { color: #fff; }
.tab-title { min-width: 0; white-space: nowrap; margin-right: auto; }
.tab-fade { -webkit-mask-image: linear-gradient(to left, transparent 0, #000 44px); mask-image: linear-gradient(to left, transparent 0, #000 44px); }
.tab-sound { margin: 0 12px 0 0; }
.tab-x { width: 24px; text-align: center; font-size: 34px; line-height: 1; margin-left: 12px; color: #ddd; }
.tab-plus { width: 40px; margin-left: 13px; text-align: center; font-size: 42px; font-weight: 300; line-height: 70px; color: #ddd; }
.tab-menu { position: absolute; right: 13px; top: 9px; width: 55px; height: 56px; border-radius: 22px; background: #3c3c3c; display: flex; align-items: center; justify-content: center; }

.toolbar-chrome { display: flex; align-items: center; height: 81px; flex: none; padding-left: 8px; background: #3c3c3c; }
.cbtn { width: 72px; height: 68px; display: flex; align-items: center; justify-content: center; margin-top: 12px; }
.omnibox { display: flex; align-items: center; width: 2148px; height: 68px; margin: 12px 0 0 16px; padding: 0 33px 0 10px; border-radius: 34px; background: #292929; }
.omni-info { width: 50px; height: 50px; border-radius: 50%; background: #3c3c3c; display: flex; align-items: center; justify-content: center; margin-right: 15px; }
.omni-url { color: #eee; font: 400 28px Inter, sans-serif; }
.omni-star { margin-left: auto; }
.exts { display: flex; align-items: center; margin: 12px 0 0 16px; }
.ext { width: 72px; height: 68px; display: flex; align-items: center; justify-content: center; flex: none; }
.ext-sep { width: 3px; height: 44px; background: #666; margin: 0 15px 0 18px; flex: none; }
.ext-clock { margin-top: 8px; }
.ext-clock-text { fill: #fff; font: 700 28px Inter, sans-serif; }
.ext-ub { fill: #fff; font: 700 15px Inter, sans-serif; }
.ext-abp { fill: #fff; font: 700 13px Inter, sans-serif; }
.ext-four { fill: #fff; font: 700 22px Inter, sans-serif; }
.avatar-chrome { width: 40px; height: 40px; border-radius: 50%; background: #d94a7c; color: #fff; display: flex; align-items: center; justify-content: center; font: 400 20px Inter, sans-serif; }

.bookmarks { display: flex; align-items: center; gap: 35px; height: 80px; flex: none; padding: 0 0 0 22px; background: #3c3c3c; color: #ccc; font: 400 23.500px Inter, sans-serif; border-bottom: 2px solid #2e2e2e; position: relative; white-space: nowrap; }
.bm { display: flex; align-items: center; gap: 12px; }
.bm-i { width: 32px; height: 32px; }
.bm-inn { fill: #fff; font: 700 13px Inter, sans-serif; }
.bm-more { position: absolute; right: 70px; top: 29px; }

/* page */
.page { display: flex; flex: 1; min-height: 0; background: #fff; }
.sidebar { position: relative; display: flex; flex-direction: column; width: 600px; flex: none; border-right: 3px solid #ddd; }
.brand { display: flex; align-items: center; gap: 26px; padding: 116px 0 0 77px; height: 165px; }
.brand-logo { width: 45px; height: 48px; }
.brand-name { font: 700 54px "DejaVu Sans Mono", monospace; letter-spacing: 0.900px; line-height: 50px; margin-top: 2px; color: transparent; background: repeating-linear-gradient(to bottom, #505050 0 4px, #8c8c8c 4px 6px); -webkit-background-clip: text; background-clip: text; transform: scaleX(1.18); transform-origin: left center; }
.nav { display: flex; flex-direction: column; padding: 146px 0 0 60px; gap: 60px; }
.nav-item { display: flex; align-items: center; gap: 40px; height: 72px; font-size: 32px; color: #222; }
.nav-ico { width: 80px; height: 72px; border-radius: 10px; display: flex; align-items: center; justify-content: center; color: #fff; }
.nav-active { color: #3b7bf6; font-weight: 700; }
.nav-active .nav-ico { background: #3b7bf6; }
.side-foot { position: absolute; left: 40px; top: 1601px; width: 517px; height: 118px; background: #fbfbfb; display: flex; align-items: center; justify-content: center; gap: 8px; font-size: 31.500px; padding-right: 0; }
.foot-name { color: #bbb; }
.foot-ver { color: #888; }
.foot-gh { width: 31px; height: 32px; color: #888; }

.content { display: flex; flex-direction: column; flex: 1; min-width: 0; }
.topbar { display: flex; align-items: flex-start; height: 154px; flex: none; padding: 21px 0 0 20px; border-bottom: 3px solid #ddd; }
.seg { display: flex; gap: 10px; width: 663px; height: 109px; padding: 11px 5px 8px 7px; background: #e9e9e9; border: 3px solid #e2e2e2; border-radius: 10px; }
.seg-btn { display: flex; align-items: center; height: 84px; border-radius: 8px; overflow: hidden; font-size: 32px; }
.seg-on { width: 290px; background: #3b7bf6; color: #fff; font-weight: 700; }
.seg-on .seg-ico { width: 84px; background: #6098f8; height: 100%; display: flex; align-items: center; justify-content: center; }
.seg-on .seg-label { margin-left: 40px; }
.seg-off { width: 345px; background: #fff; color: #444; }
.seg-off .seg-ico { width: 86px; display: flex; justify-content: center; color: #333; }
.seg-off .seg-label { margin-left: 39px; }
.top-right { display: flex; margin-left: auto; height: 110px; }
.sync { width: 175px; border-left: 3px solid #ddd; display: flex; padding: 13px 0 0 59px; }
.sync-wrap { position: relative; display: block; width: 68px; height: 59px; color: #888; }
.sync-mon { position: absolute; left: 0; bottom: 0; }
.sync-badge { position: absolute; right: 0; top: 0; width: 32px; height: 32px; border-radius: 6px; background: #888; border-bottom: 3px solid #aaa; display: flex; align-items: center; justify-content: center; }
.user { width: 314px; border-left: 3px solid #ddd; display: flex; align-items: center; padding-left: 39px; padding-top: 2px; }
.user-av { width: 64px; height: 64px; background: #555; border: 3px solid #bbb; border-radius: 8px; color: #fff; font-weight: 700; font-size: 30px; display: flex; align-items: center; justify-content: center; }
.user-name { margin-left: 20px; font-size: 32px; color: #111; }
.user-caret { width: 0; height: 0; margin: 6px 0 0 22px; border: 10px solid transparent; border-top: 12px solid #000; border-bottom: 0; }

.actions { display: flex; align-items: center; gap: 20px; height: 110px; flex: none; padding: 2px 20px 0 30px; border-bottom: 3px solid #ddd; }
.btn { display: flex; align-items: center; height: 73px; border-radius: 8px; color: #fff; font-weight: 700; font-size: 28px; letter-spacing: -1.200px; white-space: nowrap; }
.btn-blue { width: 231px; gap: 15px; padding-left: 18px; background: #3b7bf6; border-bottom: 5px solid #1d4fa5; }
.btn-grey { width: 219px; height: 77px; gap: 15px; padding-left: 22px; background: #aaa; border-bottom: 5px solid #999; }
.btn-del { margin-left: auto; width: 76px; height: 72px; border-radius: 8px; background: #b2264a; border-bottom: 5px solid #5a0b20; display: flex; align-items: center; justify-content: center; }

.work { display: flex; flex: 1; min-height: 0; }
.tree { width: 500px; flex: none; padding: 12px 0 0 34px; border-right: 3px solid #ddd; font-size: 24px; color: #111; }
.tree-row { display: flex; align-items: center; height: 44px; }
.tree-chev { width: 24px; height: 14px; margin-right: 16px; }
.tree-folder { width: 28px; height: 32px; margin-right: 14px; }
.tree-l1 { margin-left: 41px; }
.tree-l1 .tree-folder { margin-right: 8px; }
.tree-sel { width: 328px; height: 40px; line-height: 38px; padding-left: 10px; background: #e3e3e3; border-radius: 6px; font-weight: 700; text-decoration: underline; }
.tree-l2 { margin-left: 121px; }
.tree-ico { width: 30px; height: 30px; margin-right: 11px; }
.tree-apple { color: #b4bcc4; }

.panel-wrap { flex: 1; min-width: 0; padding: 10px; background: #e8edfb; }
.panel { position: relative; height: 100%; padding: 20px 20px 0; background: #fff; }
.crumb { display: inline-flex; align-items: center; height: 64px; margin-left: 20px; padding: 0 14px 0 15px; background: #eee; border: 3px solid #e0e0e0; border-radius: 8px; font-size: 32px; color: #444; }
.crumb-f { width: 28px; height: 32px; margin-right: 11px; }
.crumb-sep { margin: 0 18px 0 19px; }
.rule { height: 3px; margin: 20px 0 0; border: 0; background: #ddd; }
.grid { display: flex; gap: 41px; margin: 22px 0 0 22px; }
.up { width: 199px; display: flex; flex-direction: column; align-items: center; padding-top: 20px; font-size: 24px; color: #333; }
.up-ico { width: 128px; height: 112px; color: #3b7cf8; }
.up-label { margin-top: 36px; line-height: 28px; }
.tile { position: relative; width: 199px; height: 260px; display: flex; flex-direction: column; align-items: center; background: #e5e5e5; border: 2px dotted #a8a8a8; border-radius: 8px; font-size: 24px; color: #444; }
.tile-badge { position: absolute; right: 12px; top: 6px; width: 32px; height: 32px; display: flex; align-items: center; justify-content: center; background: #888; border-bottom: 3px solid #a0a0a0; border-radius: 6px; }
.tile-ico { height: 128px; margin-top: 10px; }
.tile-rpi { width: 103px; }
.tile-apple { width: 112px; height: 112px; margin: 19px 0 7px; color: #b4bcc4; }
.tile-win { width: 112px; height: 112px; margin: 19px 0 7px; }
.tile-ub { width: 134px; }
.tile-label { width: 170px; margin-top: 24px; line-height: 28px; text-align: center; }
.marquee { position: absolute; left: 278px; top: 203px; width: 1244px; height: 409px; background: rgba(66,140,240,.09); border: 2px solid #4a96ee; }

.win-shade { position: absolute; left: 0; right: 0; bottom: 0; height: 70px; pointer-events: none; background: linear-gradient(to top, rgba(40,40,80,.16), rgba(40,40,80,0)); -webkit-mask-image: linear-gradient(to right, transparent 100px, #000 400px, #000 3000px, transparent 3440px); mask-image: linear-gradient(to right, transparent 100px, #000 400px, #000 3000px, transparent 3440px); }

/* dock */
.dock { display: flex; width: 3115px; height: 143px; flex: none; margin: 4px 0 0 170px; padding-left: 18px; gap: 30px; background: #111; border: 3px solid #333; border-radius: 40px; position: relative; }
.dk { position: relative; display: flex; flex-direction: column; align-items: center; width: 92px; flex: none; padding-top: 18px; }
.dk-i { width: 92px; height: 92px; }
.dk-dot { display: block; width: 7px; height: 9px; margin-top: 18px; border-radius: 50%; background: #8a8a8a; }
.dk-jb { padding-top: 12px; }
.dk-jb .dk-i { width: 104px; height: 104px; }
.dk-jb .dk-dot { margin-top: 12px; }
.jb-text { fill: #fff; font: 700 33px "Open Sans", sans-serif; letter-spacing: -1px; }
.dk-term { fill: #5ad23c; font: 700 24px "Liberation Mono", monospace; }
.dk-notion { fill: #fff; font: 700 54px "Liberation Serif", serif; }
.dk-code { fill: #3668cc; font: 700 32px Roboto, sans-serif; }
.dk-badge { position: absolute; right: -16px; top: 8px; width: 42px; height: 52px; border-radius: 50%; background: #e2513f; color: #fff; font-size: 24px; display: flex; align-items: center; justify-content: center; }
.dock-sep { width: 2px; height: 108px; margin: 15px 6px 0 10px; background: #555; flex: none; }
.dk-thumb { width: 106px; padding-top: 28px; }
.dk-thumb .dk-i { width: 106px; height: 90px; }
.dk-trash { width: 82px; padding-top: 15px; }
.dk-trash .dk-i { width: 82px; height: 102px; }
```
